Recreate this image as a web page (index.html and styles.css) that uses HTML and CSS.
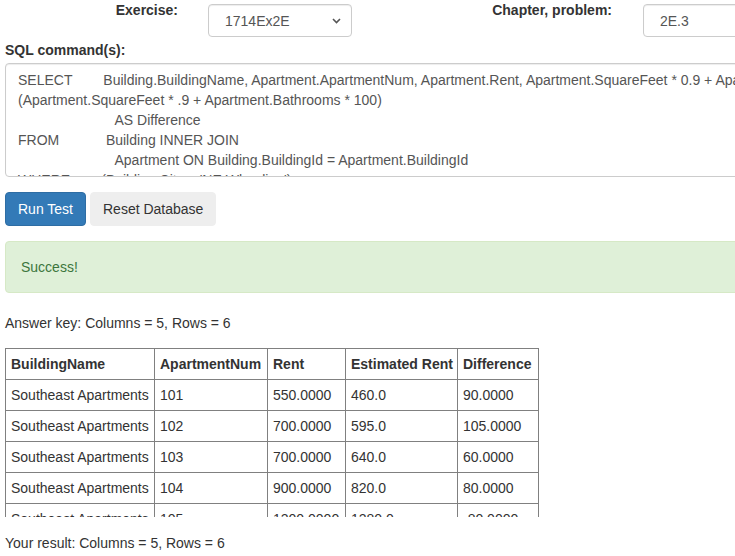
FILE: index.html
```html
<!DOCTYPE html>
<html>
<head>
<meta charset="utf-8">
<link rel="stylesheet" href="styles.css">
</head>
<body>
<div class="page">
  <div class="top-row">
    <label class="top-label ex-label">Exercise:</label>
    <div class="select-box">
      <span class="select-text">1714Ex2E</span>
      <svg class="chev" width="9" height="6" viewBox="0 0 9 6"><path d="M1 1 L4.5 4.5 L8 1" fill="none" stroke="#555" stroke-width="1.6"/></svg>
    </div>
    <label class="top-label ch-label">Chapter, problem:</label>
    <div class="input-box">2E.3</div>
  </div>
  <div class="sql-label">SQL command(s):</div>
  <div class="sql-box"><div class="sql-text">SELECT        Building.BuildingName, Apartment.ApartmentNum, Apartment.Rent, Apartment.SquareFeet * 0.9 + Apartment.Bathrooms * 100 AS [Estimated Rent], Apartment.Rent -
(Apartment.SquareFeet * .9 + Apartment.Bathrooms * 100)
                         AS Difference
FROM            Building INNER JOIN
                         Apartment ON Building.BuildingId = Apartment.BuildingId
WHERE        (Building.City = 'NE Wheeling')</div></div>
  <div class="buttons">
    <button class="btn btn-primary">Run Test</button>
    <button class="btn btn-default">Reset Database</button>
  </div>
  <div class="alert">Success!</div>
  <p class="info">Answer key: Columns = 5, Rows = 6</p>
  <div class="table-wrap">
    <table class="result">
      <thead>
        <tr><th class="c1">BuildingName</th><th class="c2">ApartmentNum</th><th class="c3">Rent</th><th class="c4">Estimated Rent</th><th class="c5">Difference</th></tr>
      </thead>
      <tbody>
        <tr><td>Southeast Apartments</td><td>101</td><td>550.0000</td><td>460.0</td><td>90.0000</td></tr>
        <tr><td>Southeast Apartments</td><td>102</td><td>700.0000</td><td>595.0</td><td>105.0000</td></tr>
        <tr><td>Southeast Apartments</td><td>103</td><td>700.0000</td><td>640.0</td><td>60.0000</td></tr>
        <tr><td>Southeast Apartments</td><td>104</td><td>900.0000</td><td>820.0</td><td>80.0000</td></tr>
        <tr><td>Southeast Apartments</td><td>105</td><td>1200.0000</td><td>1280.0</td><td>-80.0000</td></tr>
        <tr><td>Southeast Apartments</td><td>106</td><td>1000.0000</td><td>910.0</td><td>90.0000</td></tr>
      </tbody>
    </table>
  </div>
  <p class="info result-info">Your result: Columns = 5, Rows = 6</p>
</div>
</body>
</html>
```
FILE: styles.css
```css
html, body {
  margin: 0;
  padding: 0;
  overflow: hidden;
  background: #fff;
}
body {
  font-family: "Liberation Sans", Arial, sans-serif;
  font-size: 14px;
  line-height: 20px;
  color: #333;
}
.page {
  width: 1100px;
  padding-left: 5px;
}
.top-row {
  display: flex;
  align-items: flex-start;
  height: 37px;
}
.top-label {
  font-weight: bold;
  text-align: right;
}
.ex-label {
  width: 173px;
  margin-right: 30px;
}
.ch-label {
  width: 260px;
  margin-right: 31px;
}
.select-box, .input-box {
  margin-top: 4px;
  height: 33px;
  box-sizing: border-box;
  border: 1px solid #ccc;
  border-radius: 4px;
  box-shadow: inset 0 1px 1px rgba(0,0,0,.075);
  color: #555;
  display: flex;
  align-items: center;
}
.select-box {
  width: 144px;
  padding: 0 10px 0 16px;
  justify-content: space-between;
}
.input-box {
  width: 160px;
  padding: 0 12px 0 16px;
}
.chev {
  display: block;
}
.sql-label {
  font-weight: bold;
  margin-top: 3px;
  margin-bottom: 3px;
}
.sql-box {
  height: 114px;
  box-sizing: border-box;
  border: 1px solid #ccc;
  border-radius: 4px;
  box-shadow: inset 0 1px 1px rgba(0,0,0,.075);
  padding: 6px 12px 0 12px;
  overflow: hidden;
  color: #555;
}
.sql-text {
  white-space: pre;
}
.buttons {
  margin-top: 15px;
  display: flex;
  gap: 4px;
}
.btn {
  font-family: "Liberation Sans", Arial, sans-serif;
  font-size: 14px;
  line-height: 20px;
  padding: 6px 12px;
  border-radius: 4px;
  border: 1px solid transparent;
  cursor: pointer;
}
.btn-primary {
  background: #337ab7;
  border-color: #2e6da4;
  color: #fff;
}
.btn-default {
  background: #eeeeee;
  border-color: #eeeeee;
  color: #333;
}
.alert {
  margin-top: 15px;
  padding: 15px;
  background: #dff0d8;
  border: 1px solid #d6e9c6;
  border-radius: 4px;
  color: #3c763d;
}
.info {
  margin: 20px 0 0 0;
}
.table-wrap {
  margin-top: 15px;
  height: 169px;
  overflow: hidden;
  width: 540px;
}
.result {
  border-collapse: collapse;
  table-layout: fixed;
  width: 534px;
}
.result th, .result td {
  border: 1px solid #808080;
  padding: 5px;
  text-align: left;
  white-space: nowrap;
  overflow: hidden;
}
.result th {
  font-weight: bold;
}
.c1 { width: 138px; }
.c2 { width: 102px; }
.c3 { width: 67px; }
.c4 { width: 101px; }
.c5 { width: 70px; }
.result-info {
  margin-top: 16px;
}
```
